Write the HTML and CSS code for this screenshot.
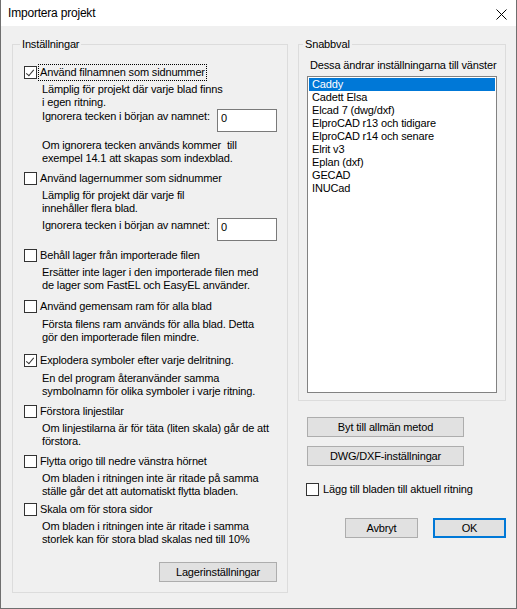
FILE: index.html
```html
<!DOCTYPE html>
<html lang="sv">
<head>
    <meta charset="UTF-8" />
    <title>Importera projekt</title>
    <link rel="stylesheet" href="styles.css">
</head>
<body>
    <div class="window">
        <div class="titlebar">
            <span class="title">Importera projekt</span>
            <svg class="close" width="11" height="11" viewBox="0 0 11 11">
                <path d="M0.5 0.5 L10.5 10.5 M10.5 0.5 L0.5 10.5" stroke="#000" stroke-width="1" fill="none" />
            </svg>
        </div>

        <div class="dialog">
            <fieldset class="group settings">
                <legend>Inställningar</legend>

                <label class="option">
                    <span class="box checked"></span>
                    <span class="focus">Använd filnamnen som sidnummer</span>
                </label>
                <p class="desc mt4">Lämplig för projekt där varje blad finns<br>i egen ritning.</p>
                <div class="ignore mt0">
                    <span>Ignorera tecken i början av namnet:</span>
                    <span class="field">0</span>
                </div>
                <p class="desc mt7">Om ignorera tecken används kommer&nbsp; till<br>exempel 14.1 att skapas som indexblad.</p>

                <label class="option mt7">
                    <span class="box"></span>
                    <span>Använd lagernummer som sidnummer</span>
                </label>
                <p class="desc mt4">Lämplig för projekt där varje fil<br>innehåller flera blad.</p>
                <div class="ignore mt3">
                    <span>Ignorera tecken i början av namnet:</span>
                    <span class="field">0</span>
                </div>

                <label class="option mt8">
                    <span class="box"></span>
                    <span>Behåll lager från importerade filen</span>
                </label>
                <p class="desc mt4">Ersätter inte lager i den importerade filen med<br>de lager som FastEL och EasyEL använder.</p>

                <label class="option mt8">
                    <span class="box"></span>
                    <span>Använd gemensam ram för alla blad</span>
                </label>
                <p class="desc mt5">Första filens ram används för alla blad. Detta<br>gör den importerade filen mindre.</p>

                <label class="option mt10">
                    <span class="box checked"></span>
                    <span>Explodera symboler efter varje delritning.</span>
                </label>
                <p class="desc mt5">En del program återanvänder samma<br>symbolnamn för olika symboler i varje ritning.</p>

                <label class="option mt7">
                    <span class="box"></span>
                    <span>Förstora linjestilar</span>
                </label>
                <p class="desc mt4">Om linjestilarna är för täta (liten skala) går de att<br>förstora.</p>

                <label class="option mt7">
                    <span class="box"></span>
                    <span>Flytta origo till nedre vänstra hörnet</span>
                </label>
                <p class="desc mt4">Om bladen i ritningen inte är ritade på samma<br>ställe går det att automatiskt flytta bladen.</p>

                <label class="option mt5">
                    <span class="box"></span>
                    <span>Skala om för stora sidor</span>
                </label>
                <p class="desc mt4">Om bladen i ritningen inte är ritade i samma<br>storlek kan för stora blad skalas ned till 10%</p>

                <div class="row-end">
                    <button class="btn btn-layers">Lagerinställningar</button>
                </div>
            </fieldset>

            <div class="side">
                <fieldset class="group quick">
                    <legend>Snabbval</legend>
                    <p class="hint">Dessa ändrar inställningarna till vänster</p>
                    <ul class="listbox">
                        <li class="selected">Caddy</li>
                        <li>Cadett Elsa</li>
                        <li>Elcad 7 (dwg/dxf)</li>
                        <li>ElproCAD r13 och tidigare</li>
                        <li>ElproCAD r14 och senare</li>
                        <li>Elrit v3</li>
                        <li>Eplan (dxf)</li>
                        <li>GECAD</li>
                        <li>INUCad</li>
                    </ul>
                </fieldset>

                <div class="side-buttons">
                    <button class="btn btn-wide">Byt till allmän metod</button>
                    <button class="btn btn-wide">DWG/DXF-inställningar</button>
                </div>

                <label class="option add-option">
                    <span class="box"></span>
                    <span>Lägg till bladen till aktuell ritning</span>
                </label>

                <div class="actions">
                    <button class="btn btn-action">Avbryt</button>
                    <button class="btn btn-action btn-default">OK</button>
                </div>
            </div>
        </div>
    </div>
</body>
</html>
```

FILE: styles.css
```css
* {
    box-sizing: border-box;
}

body {
    margin: 0;
    background: #fff;
    font-family: "Liberation Sans", Arial, sans-serif;
    font-size: 11px;
    letter-spacing: -0.15px;
    color: #000;
}

.window {
    width: 517px;
    height: 609px;
    border: 1px solid #6f6f6f;
    border-top: none;
    background: #f0f0f0;
    display: flex;
    flex-direction: column;
}

.titlebar {
    height: 26px;
    flex-shrink: 0;
    background: #fff;
    display: flex;
    align-items: center;
    justify-content: space-between;
    padding: 0 9px 0 7px;
}

    .titlebar .title {
        font-size: 12px;
        letter-spacing: -0.2px;
        line-height: 26px;
    }

    .titlebar .close {
        margin-top: 3px;
    }

.dialog {
    display: flex;
    gap: 10px;
    padding: 11px 10px 0 11px;
}

.group {
    margin: 0;
    border: 1px solid #dcdcdc;
    min-width: 0;
}

    .group legend {
        padding: 0 2px;
        margin-left: -4px;
        line-height: 14px;
    }

.settings {
    width: 276px;
    align-self: flex-start;
    padding: 15px 10px 10px 11px;
}

.option {
    display: flex;
    align-items: center;
    height: 13px;
    line-height: 13px;
    white-space: nowrap;
}

.box {
    width: 13px;
    height: 13px;
    flex-shrink: 0;
    border: 1px solid #333;
    background: #fff;
    margin-right: 3px;
    position: relative;
}

    .box.checked::after {
        content: "";
        position: absolute;
        left: 3px;
        top: 1px;
        width: 3px;
        height: 7px;
        border-right: 1px solid #333;
        border-bottom: 1px solid #333;
        transform: rotate(40deg);
    }

.focus {
    outline: 1px dotted #000;
    outline-offset: 1px;
}

.desc {
    margin: 0 0 0 18px;
    line-height: 13px;
    white-space: nowrap;
}

.ignore {
    display: flex;
    justify-content: space-between;
    align-items: flex-start;
    padding-left: 18px;
}

    .ignore span:first-child {
        line-height: 13px;
        padding-top: 1px;
    }

.field {
    width: 60px;
    height: 23px;
    border: 1px solid #7a7a7a;
    background: #fff;
    padding: 2px 3px;
    line-height: 13px;
}

.mt0 { margin-top: 0; }
.mt3 { margin-top: 3px; }
.mt4 { margin-top: 4px; }
.mt5 { margin-top: 5px; }
.mt7 { margin-top: 7px; }
.mt8 { margin-top: 8px; }
.mt10 { margin-top: 10px; }

.row-end {
    display: flex;
    justify-content: flex-end;
    margin-top: 16px;
}

.btn {
    height: 20px;
    background: #e1e1e1;
    border: 1px solid #adadad;
    font-family: inherit;
    font-size: 11px;
    letter-spacing: -0.15px;
    color: #000;
    padding: 0;
}

.btn-layers {
    width: 118px;
}

.side {
    width: 208px;
    display: flex;
    flex-direction: column;
}

.quick {
    padding: 8px 8px 7px 8px;
}

.hint {
    margin: 0 0 0 3px;
    line-height: 13px;
    white-space: nowrap;
}

.listbox {
    list-style: none;
    margin: 4px 0 0 0;
    padding: 1px;
    height: 317px;
    border: 1px solid #828282;
    background: #fff;
}

    .listbox li {
        line-height: 13px;
        padding-left: 3px;
    }

        .listbox li.selected {
            background: #0078d7;
            color: #fff;
        }

.side-buttons {
    display: flex;
    flex-direction: column;
    gap: 9px;
    margin: 16px 0 0 9px;
}

.btn-wide {
    width: 157px;
}

.add-option {
    margin: 17px 0 0 8px;
}

    .add-option .box {
        margin-right: 4px;
    }

.actions {
    display: flex;
    justify-content: flex-end;
    gap: 15px;
    margin-top: 22px;
}

.btn-action {
    width: 73px;
}

.btn-default {
    border: 2px solid #0078d7;
}
```
